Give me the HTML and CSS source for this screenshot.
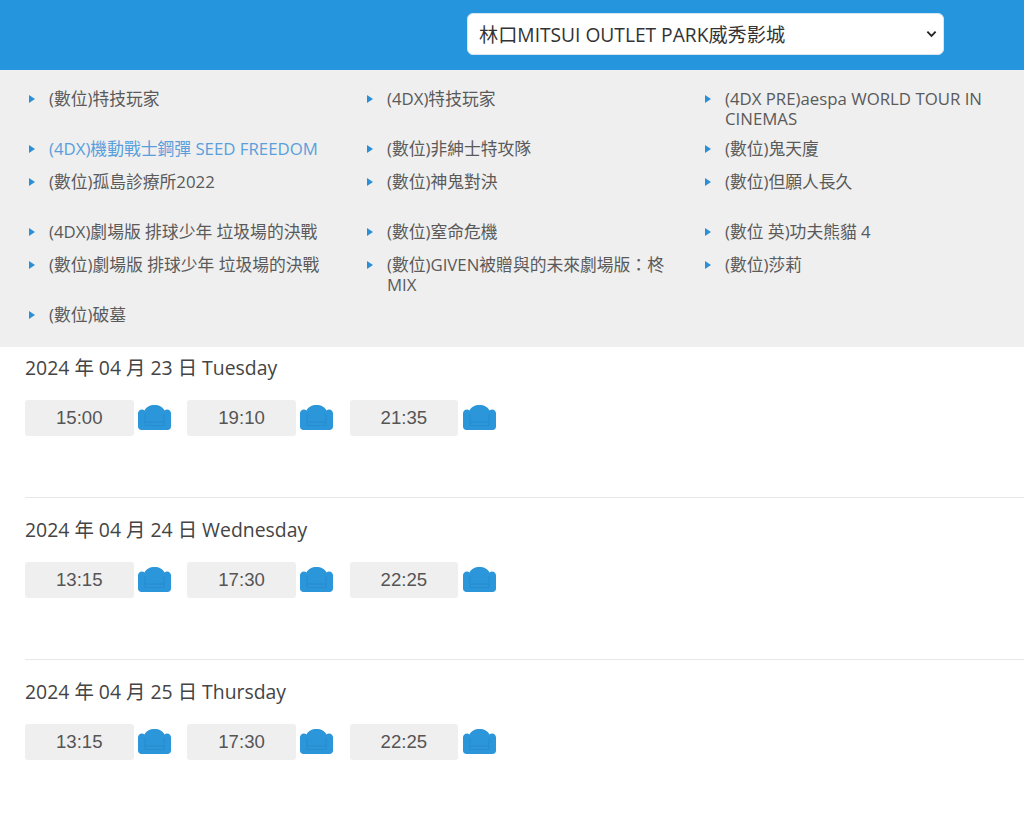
FILE: index.html
```html
<!DOCTYPE html>
<html lang="zh-Hant">
<head>
<meta charset="utf-8">
<title>場次</title>
<link rel="stylesheet" href="styles.css">
</head>
<body>
<header class="top">
  <select class="cinema"><option>林口MITSUI OUTLET PARK威秀影城</option></select>
</header>
<ul class="movies">
  <li>(數位)特技玩家</li>
  <li>(4DX)特技玩家</li>
  <li>(4DX PRE)aespa WORLD TOUR IN CINEMAS</li>
  <li class="active">(4DX)機動戰士鋼彈 SEED FREEDOM</li>
  <li>(數位)非紳士特攻隊</li>
  <li>(數位)鬼天廈</li>
  <li>(數位)孤島診療所2022</li>
  <li>(數位)神鬼對決</li>
  <li>(數位)但願人長久</li>
  <li>(4DX)劇場版 排球少年 垃圾場的決戰</li>
  <li>(數位)窒命危機</li>
  <li>(數位 英)功夫熊貓 4</li>
  <li>(數位)劇場版 排球少年 垃圾場的決戰</li>
  <li>(數位)GIVEN被贈與的未來劇場版：柊MIX</li>
  <li>(數位)莎莉</li>
  <li>(數位)破墓</li>
</ul>
<main class="days">
  <section class="day">
    <h2>2024 年 04 月 23 日 Tuesday</h2>
    <div class="times">
      <div class="slot"><a class="time">15:00</a><svg class="seat" viewBox="0 0 33 25"><use href="#seat"/></svg></div>
      <div class="slot"><a class="time">19:10</a><svg class="seat" viewBox="0 0 33 25"><use href="#seat"/></svg></div>
      <div class="slot"><a class="time">21:35</a><svg class="seat" viewBox="0 0 33 25"><use href="#seat"/></svg></div>
    </div>
  </section>
  <section class="day">
    <h2>2024 年 04 月 24 日 Wednesday</h2>
    <div class="times">
      <div class="slot"><a class="time">13:15</a><svg class="seat" viewBox="0 0 33 25"><use href="#seat"/></svg></div>
      <div class="slot"><a class="time">17:30</a><svg class="seat" viewBox="0 0 33 25"><use href="#seat"/></svg></div>
      <div class="slot"><a class="time">22:25</a><svg class="seat" viewBox="0 0 33 25"><use href="#seat"/></svg></div>
    </div>
  </section>
  <section class="day">
    <h2>2024 年 04 月 25 日 Thursday</h2>
    <div class="times">
      <div class="slot"><a class="time">13:15</a><svg class="seat" viewBox="0 0 33 25"><use href="#seat"/></svg></div>
      <div class="slot"><a class="time">17:30</a><svg class="seat" viewBox="0 0 33 25"><use href="#seat"/></svg></div>
      <div class="slot"><a class="time">22:25</a><svg class="seat" viewBox="0 0 33 25"><use href="#seat"/></svg></div>
    </div>
  </section>
</main>
<svg class="defs" width="0" height="0" aria-hidden="true">
  <symbol id="seat" viewBox="0 0 33 25">
    <path fill="#2b96d9" d="M6.500 5.500C8 2 12 0 16.500 0S25 2 26.500 5.500C27.300 4.800 28.200 4.500 29 4.500C31.500 4.500 33 6.300 33 8.500V21.500C33 23.500 31.500 25 29.500 25H3.500C1.500 25 0 23.500 0 21.500V8.500C0 6.300 1.500 4.500 4 4.500C4.800 4.500 5.700 4.800 6.500 5.500Z"/>
    <path fill="none" stroke="#2688c8" stroke-width=".6" d="M7 9V20.500H26V9M7 17H26"/>
  </symbol>
</svg>
</body>
</html>
```
FILE: styles.css
```css
* { box-sizing: border-box; }
html, body { margin: 0; padding: 0; }
body {
  background: #fff;
  color: #444;
  font-family: "Open Sans", "Noto Sans CJK TC", sans-serif;
  overflow-x: hidden;
}
.top {
  height: 70px;
  background: #2596de;
  padding: 13px 80px 0 467px;
}
.cinema {
  display: block;
  width: 477px;
  height: 42px;
  border: 1px solid #d5e6f2;
  border-radius: 6px;
  appearance: none;
  background: #fff url("data:image/svg+xml,%3Csvg xmlns='http://www.w3.org/2000/svg' viewBox='0 0 12 8'%3E%3Cpath d='M1.500 1.500 6 6l4.500-4.500' fill='none' stroke='%23222' stroke-width='2'/%3E%3C/svg%3E") no-repeat right 6px center / 11px 8px;
  color: #333;
  font-family: "Open Sans", "Noto Sans CJK TC", sans-serif;
  font-size: 19.200px;
  padding: 0 24px 0 11px;
}
.movies {
  list-style: none;
  margin: 0;
  height: 277px;
  background: #efefef;
  padding: 19px 0 0 25px;
  display: grid;
  grid-template-columns: repeat(3, 338px);
  grid-template-rows: 50px 33px 50px 33px 50px auto;
}
.movies li {
  position: relative;
  padding-left: 24px;
  padding-right: 14px;
  font-size: 16.800px;
  line-height: 20px;
  color: #5a5a5a;
}
.movies li::before {
  content: "";
  position: absolute;
  left: 4px;
  top: 6px;
  border-left: 6px solid #2b8fd8;
  border-top: 4px solid transparent;
  border-bottom: 4px solid transparent;
}
.movies li.active { color: #5a9fdc; }
.day {
  height: 151px;
  margin: 0 0 11px 25px;
  border-bottom: 1px solid #e8e8e8;
}
.day:last-child { border-bottom: 0; }
.day h2 {
  margin: 0;
  padding-top: 8px;
  font-size: 19.400px;
  line-height: 26px;
  font-weight: 400;
  color: #444;
}
.times {
  display: flex;
  gap: 16.300px;
  margin-top: 19px;
}
.slot {
  display: flex;
  align-items: center;
  gap: 4.500px;
}
.time {
  display: block;
  width: 108.500px;
  height: 36px;
  background: #efefef;
  border-radius: 3px;
  text-align: center;
  font-family: "Liberation Sans", sans-serif;
  font-size: 18.600px;
  line-height: 36px;
  color: #555;
}
.seat {
  display: block;
  width: 33px;
  height: 25px;
  position: relative;
  top: -1px;
}
.defs { position: absolute; }
```
